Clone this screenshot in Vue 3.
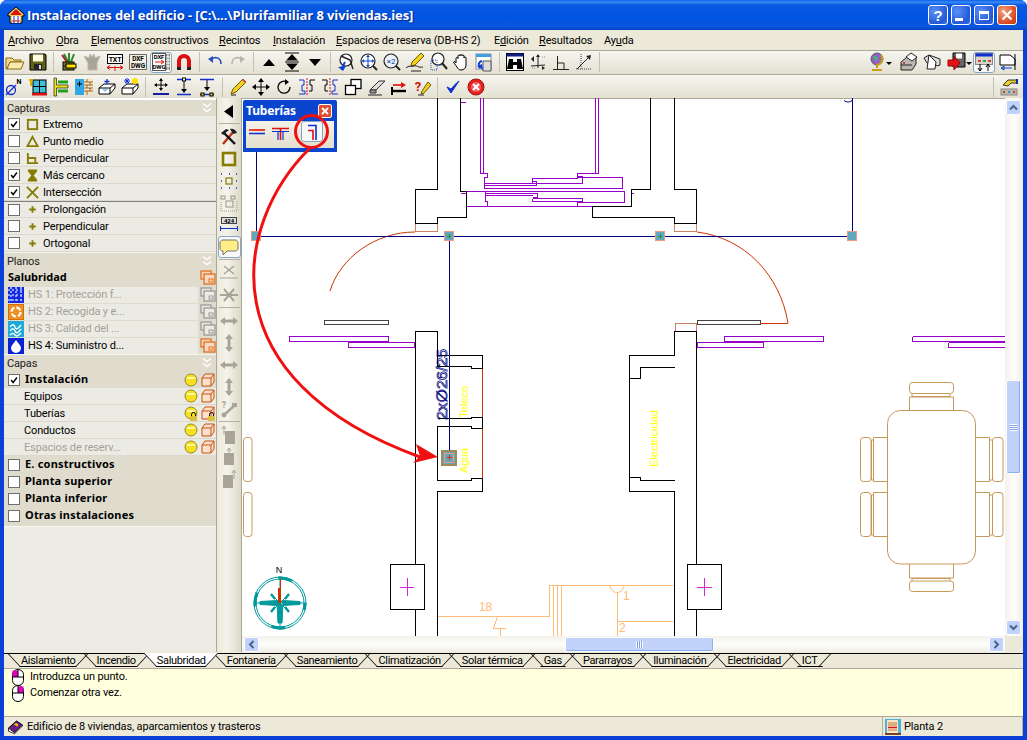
<script setup>
// small icon set, all drawn on a 20x20 box
const olive = '#857c00'
const icons = {
  folder: `<path d="M1 6h6l2 2h7v2H5L2 17H1z" fill="#f3d987" stroke="#8a6a10"/><path d="M5 10h14l-3 7H2z" fill="#fbeab0" stroke="#8a6a10"/>`,
  save: `<path d="M2 2h15l1 1v15H2z" fill="#5f5f18" stroke="#000"/><rect x="5" y="2.5" width="10" height="7" fill="#fffbe0"/><rect x="6" y="12" width="8" height="6" fill="#222"/><rect x="11" y="13" width="2" height="4" fill="#ddd"/>`,
  pens: `<path d="M5 2l4 8M15 2l-3 8M10 1v9" stroke="#2a8a2a" stroke-width="2"/><path d="M3 3l5 7" stroke="#b02020" stroke-width="2"/><rect x="4" y="10" width="11" height="8" fill="#7a7a20" stroke="#000"/><rect x="7" y="12" width="10" height="4" fill="#ffe400" stroke="#000"/><path d="M7 14h-3" stroke="#00a"/>`,
  shirt: `<path d="M2 4l5 2 1-4 2 3 2-3 1 4 5-2-3 7v7H6v-7z" fill="#a8a498" stroke="#bdb9ab"/>`,
  txt: `<rect x="2.5" y="2.5" width="15" height="9" fill="#fff" stroke="#000"/><text x="10" y="9.6" font-size="7" font-weight="700" text-anchor="middle">TXT</text><path d="M2 15.5h16M5 13.5l-3 2 3 2M15 13.5l3 2-3 2M10 14v5" stroke="#e01010" fill="none"/>`,
  dxf: `<path d="M1.5 2.5h17v15h-17z" fill="#f4f1e4" stroke="#666"/><text x="10" y="9" font-size="6.5" font-weight="700" text-anchor="middle">DXF</text><text x="10" y="16" font-size="6.5" font-weight="700" text-anchor="middle">DWG</text>`,
  dxfdwg: `<rect x="1.5" y="1.5" width="13" height="17" fill="#fff" stroke="#555"/><text x="8" y="7" font-size="6" font-weight="700" text-anchor="middle">DXF</text><text x="8" y="17" font-size="6" font-weight="700" text-anchor="middle">DWG</text><path d="M4 10h9M10 8l3 2-3 2" stroke="#e01010" fill="none"/><path d="M15 2h4v16h-4z" fill="#8a8068"/><path d="M15 5h4M15 8h4M15 11h4M15 14h4M17 2v16" stroke="#fff"/>`,
  magnet: `<path d="M5 16V9a5 5 0 0 1 10 0v7" fill="none" stroke="#d81010" stroke-width="4"/><path d="M3 15h4v3H3zM13 15h4v3h-4z" fill="#222"/>`,
  undo: `<path d="M6 7c5-3 10-1 10 5" fill="none" stroke="#2a50c0" stroke-width="1.6"/><path d="M3 7l5-3 0 7z" fill="#2a50c0"/>`,
  redo: `<path d="M14 7c-5-3-10-1-10 5" fill="none" stroke="#b8b5a8" stroke-width="1.6"/><path d="M17 7l-5-3 0 7z" fill="#b8b5a8"/>`,
  up: `<path d="M4 14h12l-6-7z" fill="#000"/>`,
  updown: `<path d="M4 8.500h12l-6-6.500zM4 11.500h12l-6 6.500z" fill="#000"/><path d="M3 10h14" stroke="#000"/><path d="M3 1h14M3 19h14" stroke="#000"/>`,
  down: `<path d="M4 7h12l-6 7z" fill="#000"/>`,
  zoomr: `<circle cx="10" cy="8" r="6" fill="#fff" stroke="#222" stroke-width="1.2"/><path d="M5 4l9 4 3 9" fill="none" stroke="#222" stroke-width="1.4"/><path d="M9 10c-2 3-3 5-3 8" fill="none" stroke="#1040d0" stroke-width="2"/><path d="M2 15l5 4 3-5z" fill="#1040d0"/>`,
  zoomall: `<circle cx="9" cy="9" r="7" fill="#fff" stroke="#222" stroke-width="1.2"/><path d="M9 3v12M3 9h12" stroke="#1040d0"/><path d="M9 3l-2 2h4zM9 15l-2-2h4zM3 9l2-2v4zM15 9l-2-2v4z" fill="#1040d0"/><path d="M14 14l4 4" stroke="#222" stroke-width="2"/>`,
  zoom2: `<circle cx="9" cy="9" r="7" fill="#eaf4fa" stroke="#222" stroke-width="1.2"/><text x="9" y="12" font-size="8" text-anchor="middle" fill="#1040a0">×2</text><path d="M14 14l4 4" stroke="#222" stroke-width="2"/>`,
  scribble: `<path d="M16 1l3 3-9 9-4 1 1-4z" fill="#f5d020" stroke="#6a5a00"/><path d="M1 16c3-3 5-1 8-2s4 2 9 1M6 19h10" fill="none" stroke="#222"/>`,
  zoomwin: `<circle cx="10" cy="7" r="6" fill="#fff" stroke="#222" stroke-width="1.2"/><path d="M3 8h6v10H3zM9 13h8" fill="none" stroke="#2050c0" stroke-dasharray="1 1"/><path d="M14 11l5 6" stroke="#222" stroke-width="2"/>`,
  hand: `<path d="M5 11V6.500a1 1 0 0 1 2 0V4a1 1 0 0 1 2 0v-.500a1 1 0 0 1 2 0V4a1 1 0 0 1 2 0v2a1 1 0 0 1 2 0v7c0 3-2 5-5 5-2 0-3-1-4-3l-3-4c-1-2 1-2 2 0z" fill="#fff" stroke="#000"/>`,
  winback: `<rect x="2" y="2" width="15" height="15" fill="#fff" stroke="#889"/><rect x="2" y="2" width="15" height="3" fill="#40a0e0"/><path d="M9 9h8v10H9z" fill="#ddd" stroke="#555"/><path d="M8 9c-4 1-4 5-2 7" fill="none" stroke="#1040d0" stroke-width="2"/><path d="M3 14l6 4-1-6z" fill="#1040d0"/>`,
  binoc: `<rect x="1.500" y="1.500" width="17" height="17" fill="#fff" stroke="#000"/><rect x="1.500" y="1.500" width="17" height="3" fill="#102080"/><path d="M4 7h4v3h4V7h4l2 10h-6v-4H8v4H2z" fill="#000"/>`,
  axes: `<path d="M10 3v13M3 14l14-1" stroke="#222" fill="none"/><path d="M3 7l3-3v6zM10 2l-2 3h4zM17 16l-3-2v4z" fill="#222"/><path d="M4 16h4M14 5h3" stroke="#888" stroke-dasharray="1 1"/>`,
  perp: `<path d="M2 17.500h16M6.500 17V4M6.500 11H13v6" fill="none" stroke="#222"/>`,
  diag: `<path d="M3 17L16 4" stroke="#222"/><path d="M17 3l-5 1 4 4z" fill="#222"/><path d="M7 2v16M2 17h16" stroke="#444" stroke-dasharray="1 1"/>`,
  globe: `<circle cx="10" cy="7" r="6" fill="#9c5cc8" stroke="#556"/><path d="M6 4l5 1-2 5zM12 9l3-2v3z" fill="#30c060"/><path d="M14 3c3 5 0 10-5 10" fill="none" stroke="#c8a010" stroke-width="2"/><path d="M10 13v3M5 18h10" stroke="#c8a010" stroke-width="2"/>`,
  printer: `<path d="M2 10l6-5h9v7l-4 6H2z" fill="#b8b8b0" stroke="#222"/><path d="M7 5l5-4 6 4-5 4z" fill="#fff" stroke="#222"/><path d="M2 13h11" stroke="#222"/><circle cx="5" cy="11" r="1" fill="#d02020"/>`,
  plotter: `<path d="M2 6l5-3 11 4v6l-3 1-2-2-8-1z" fill="#ddd" stroke="#222"/><path d="M7 3l-2 14h8l1-7z" fill="#fff" stroke="#222"/>`,
  export: `<path d="M6 1h12v14H6z" fill="#666" stroke="#000"/><rect x="9" y="1.500" width="6" height="5" fill="#fff"/><path d="M1 8h6V4l6 7-6 7v-4H1z" fill="#e81010" stroke="#901010"/>`,
  bars: `<rect x="1.500" y="1.500" width="17" height="11" fill="#d8d5c8" stroke="#888"/><rect x="1.500" y="1.500" width="17" height="3" fill="#1030d0"/><path d="M4 8h3v2H4z" fill="#d04040"/><path d="M9 8h3v2H9z" fill="#30a060"/><path d="M14 8h3v2h-3z" fill="#d04040"/><path d="M6 12v7M14 12v7M4 16l2 3 2-3M12 15l2-3 2 3" stroke="#000" fill="none"/>`,
  folderb: `<path d="M3 3h10l5 4v6H3z" fill="#fff" stroke="#000"/><path d="M4 16h11M4 16l3-2v4z" stroke="#1040d0" fill="none"/><path d="M18 2v16" stroke="#000"/>`,
  oslash: `<circle cx="6" cy="13" r="4.500" fill="none" stroke="#1030d0" stroke-width="1.300"/><path d="M1 18L11 8" stroke="#1030d0" stroke-width="1.300"/><text x="14" y="7" font-size="7" font-weight="700" text-anchor="middle">N</text>`,
  windowr: `<rect x="5" y="3" width="13" height="13" fill="#40c0d8" stroke="#000"/><path d="M11.500 3v13M5 9.500h13" stroke="#000"/><rect x="4" y="16" width="15" height="2.500" fill="#e01010"/><path d="M3 3v6M1 3h4" stroke="#e0b000" stroke-width="2"/>`,
  tpipe: `<path d="M3 1v18h2.500V11H17V8H5.500V1z" fill="#e8e020" stroke="#000" stroke-width=".6"/><path d="M7 5h10M7 14h10" stroke="#20a020" stroke-width="3"/>`,
  brick: `<rect x="1" y="2" width="9" height="16" fill="#30a8e8"/><path d="M3 7h5M5.500 4.500v5" stroke="#000"/><rect x="10" y="2" width="9" height="16" fill="#f2e4c4"/><path d="M10 5h9M10 8h9M10 11h9M10 14h9M13 2v3M16 5v3M13 8v3M16 11v3M13 14v4" stroke="#8a4a10" stroke-width=".8"/>`,
  boxplus: `<path d="M2 11l5-4h11v4l-5 6H2z" fill="#fff" stroke="#000"/><path d="M2 11h11v6M13 11l5-4" fill="none" stroke="#000"/><path d="M10 2v5M7.500 4.500h5" stroke="#1030d0" stroke-width="1.300"/><path d="M5 12l3 3 3-3" fill="#80c8f0"/>`,
  boxsun: `<path d="M2 11l5-4h11v4l-5 6H2z" fill="#fff" stroke="#000"/><path d="M2 11h11v6M13 11l5-4" fill="none" stroke="#000"/><circle cx="15" cy="4" r="3" fill="#ffe000"/><path d="M7 1v6M4 4h6M5 2l4 4M9 2L5 6" stroke="#1030d0"/>`,
  movedim: `<path d="M10 2v11M4 8h12" stroke="#000"/><path d="M10 1L8 4h4zM10 14l-2-3h4zM3 8l3-2v4zM17 8l-3-2v4z" fill="#000"/><rect x="2" y="16" width="16" height="2" fill="#1020a0"/>`,
  dimup: `<path d="M3 2.500h14" stroke="#1030d0" stroke-width="1.300"/><rect x="8.500" y="1" width="3" height="3" fill="#fff" stroke="#000"/><path d="M10 4v9" stroke="#000"/><path d="M10 16l-3-4h6z" fill="#000"/><path d="M3 17.500h14" stroke="#1030d0" stroke-width="1.300"/>`,
  dimdown: `<path d="M3 2.500h14" stroke="#1030d0" stroke-width="1.300"/><path d="M10 3v8" stroke="#000"/><path d="M10 14l-3-4h6z" fill="#000"/><path d="M3 17.500h14" stroke="#1030d0" stroke-width="1.300"/><rect x="4" y="16" width="3" height="3" fill="#e8d000" stroke="#000"/><rect x="13" y="16" width="3" height="3" fill="#e8d000" stroke="#000"/>`,
  pencil: `<path d="M15 2l3 3-10 10-5 2 2-5z" fill="#f5d020" stroke="#6a5a00"/><path d="M14 3l3 3 1-1-3-3z" fill="#e04040"/><path d="M3 18h5" stroke="#222"/>`,
  move: `<path d="M10 3v14M3 10h14" stroke="#000"/><path d="M10 1L7 5h6zM10 19l-3-4h6zM1 10l4-3v6zM19 10l-4-3v6z" fill="#000"/>`,
  rotate: `<path d="M16 10a6 6 0 1 1-3-5" fill="none" stroke="#000" stroke-width="1.300"/><path d="M11 2l4 3-4 3z" fill="#000"/>`,
  mirrorl: `<path d="M10 1v18" stroke="#e01010" stroke-dasharray="2 1"/><path d="M2 3h5v5H5v6h3v3H2" fill="none" stroke="#1030d0"/><path d="M18 3h-5v5h2v6h-3" fill="none" stroke="#000"/>`,
  mirrorr: `<path d="M10 1v18" stroke="#e01010" stroke-dasharray="2 1"/><path d="M18 3h-5v5h2v6h-3v3h6" fill="none" stroke="#1030d0"/><path d="M2 3h5v5H5v6h3" fill="none" stroke="#000"/>`,
  copy: `<rect x="8" y="2.500" width="10" height="9" fill="#fff" stroke="#000" stroke-width="1.300"/><rect x="2.500" y="8.500" width="10" height="9" fill="#fff" stroke="#000" stroke-width="1.300"/>`,
  eraser: `<path d="M4 13l9-9h6l-9 9z" fill="#ddd" stroke="#333"/><path d="M4 13h6v3H4z" fill="#999" stroke="#333"/><path d="M2 18h14" stroke="#222"/>`,
  swap: `<path d="M4 8h9" stroke="#e01010" stroke-width="1.600"/><path d="M12 5l5 3-5 3z" fill="#e01010"/><path d="M4 14h13" stroke="#000" stroke-width="2.400"/><path d="M3 10v8" stroke="#000" stroke-width="2"/>`,
  qpen: `<text x="6" y="13.500" font-size="13" font-weight="700" fill="#d01010" text-anchor="middle">?</text><path d="M16 5l3 3-7 8-3 1 1-3z" fill="#f5d020" stroke="#6a5a00"/><path d="M6 18h6" stroke="#222"/>`,
  check: `<path d="M4 10l4 6 8-12c-3 2-6 6-8 8z" fill="#1030d0" stroke="#1030d0" stroke-linejoin="round"/>`,
  cancel: `<circle cx="10" cy="10" r="8" fill="#e82020" stroke="#a01010"/><circle cx="10" cy="10" r="5" fill="#f06060"/><path d="M7 7l6 6M13 7l-6 6" stroke="#fff" stroke-width="2"/>`,
  handbars: `<path d="M4 8l5-5h9v3H12l-3 3z" fill="#f0d020" stroke="#333"/><path d="M17 2h2v5h-2z" fill="#1030a0"/><rect x="2" y="12" width="16" height="6" fill="#bbb8aa" stroke="#888"/><rect x="4" y="14" width="2" height="2" fill="#d04040"/><rect x="9" y="14" width="2" height="2" fill="#3090d0"/><rect x="14" y="14" width="2" height="2" fill="#d04040"/>`,
  arrowl: `<path d="M14 4v13L5 10.500z" fill="#000"/>`,
  tools: `<path d="M4 17L15 4" stroke="#c03010" stroke-width="2.400"/><path d="M16 17L5 6" stroke="#111" stroke-width="2.400"/><path d="M2 6l5-4 3 1-6 5zM11 2c3-1 6 1 7 4l-4 1z" fill="#222"/>`,
  square: `<rect x="4" y="4" width="12" height="12" fill="none" stroke="${olive}" stroke-width="2.600"/>`,
  snapdots: `<rect x="7" y="7" width="6" height="6" fill="none" stroke="${olive}" stroke-width="1.200"/><path d="M2 3h1M10 3h1M17 3h1M2 10h1M17 10h1M2 17h1M10 17h1M17 17h1" stroke="#1030d0" stroke-width="1.400"/>`,
  snapgrey: `<rect x="2" y="3" width="4" height="3" fill="none" stroke="#99968a"/><rect x="12" y="3" width="4" height="3" fill="none" stroke="#99968a"/><rect x="7" y="8" width="7" height="6" fill="none" stroke="#99968a"/><path d="M2 9v9h16V8" fill="none" stroke="#99968a" stroke-dasharray="1 1"/>`,
  dimbox: `<rect x="2.500" y="2.500" width="15" height="6" fill="#ddd" stroke="#444"/><text x="10" y="8" font-size="6" font-weight="700" text-anchor="middle">424</text><path d="M1 13.500h18M1.500 11v5M18.500 11v5" stroke="#1030d0"/>`,
  comment: `<path d="M4 3h12c2 0 3 1 3 3v5c0 2-1 3-3 3H8l-4 4v-4c-2 0-3-1-3-3V6c0-2 1-3 3-3z" fill="#ffee88" stroke="#776"/>`,
  crossa: `<path d="M5 3l10 8M15 3L5 11" stroke="#a8a498" stroke-width="1.600"/><path d="M1 15h18" stroke="#a8a498"/>`,
  crossb: `<path d="M1 10h18" stroke="#a8a498" stroke-width="2"/><path d="M5 4l10 12M15 4L5 16" stroke="#a8a498" stroke-width="2"/>`,
  harr: `<path d="M5 10h10" stroke="#a8a498" stroke-width="3"/><path d="M1 10l5-4v8zM19 10l-5-4v8z" fill="#a8a498"/>`,
  varr: `<path d="M10 5v10" stroke="#a8a498" stroke-width="3"/><path d="M10 1l-4 5h8zM10 19l-4-5h8z" fill="#a8a498"/>`,
  qknot: `<text x="5" y="9" font-size="9" fill="#a8a498" font-weight="700" text-anchor="middle">?</text><path d="M5 16l11-10" stroke="#a8a498" stroke-width="2.400"/><circle cx="5" cy="16" r="2.400" fill="#a8a498"/><rect x="13" y="4" width="5" height="4" fill="#a8a498"/>`,
  walla: `<path d="M6 6h10v13H6z" fill="#a8a498"/><path d="M5 1v9M3 4l2-3 2 3" stroke="#a8a498" fill="none"/>`,
  wallb: `<path d="M5 6h10v12H5z" fill="#a8a498"/><path d="M10 1v5M8 4l2-3 2 3" stroke="#a8a498" fill="none"/>`,
  wallc: `<path d="M4 6h10v13H4z" fill="#a8a498"/><path d="M15 1v9M13 4l2-3 2 3" stroke="#a8a498" fill="none"/>`,
}

const row1 = ['folder', 'save', '|', 'pens', 'shirt', 'txt', 'dxf', '*dxfdwg', 'magnet', '|', 'undo', 'redo', '|', 'up', 'updown', 'down', '|',
  'zoomr', 'zoomall', 'zoom2', 'scribble', 'zoomwin', 'hand', 'winback', '|', 'binoc', 'axes', 'perp', 'diag', '|']
const row2 = ['oslash', 'windowr', 'tpipe', 'brick', 'boxplus', 'boxsun', '|', 'movedim', 'dimup', 'dimdown', '|',
  'pencil', 'move', 'rotate', 'mirrorl', 'mirrorr', 'copy', 'eraser', 'swap', 'qpen', '|', 'check', 'cancel']
const side = ['arrowl', '|', 'tools', 'square', 'snapdots', 'snapgrey', 'dimbox', '*comment', '|', 'crossa', 'crossb', '|',
  'harr', 'varr', 'harr', 'varr', 'qknot', '|', 'walla', 'wallb', 'wallc']

const capturas = [
  { label: 'Extremo', on: true, shape: 'square' },
  { label: 'Punto medio', shape: 'tri' },
  { label: 'Perpendicular', shape: 'perp' },
  { label: 'Más cercano', on: true, shape: 'hour' },
  { label: 'Intersección', on: true, shape: 'x' },
  { label: 'Prolongación', shape: 'plus', line: true },
  { label: 'Perpendicular', shape: 'plus' },
  { label: 'Ortogonal', shape: 'plus' },
]
const snapShapes = {
  square: `<rect x="2" y="2" width="10" height="10" fill="none" stroke="${olive}" stroke-width="2"/>`,
  tri: `<path d="M7 2l5.500 10h-11z" fill="none" stroke="${olive}" stroke-width="2"/>`,
  perp: `<path d="M2 1v11h11M2 6.500h8V12" fill="none" stroke="${olive}" stroke-width="2"/>`,
  hour: `<path d="M2 1.500h10M2 12.500h10M3 2l8 10M11 2L3 12" fill="none" stroke="${olive}" stroke-width="2"/><path d="M4 2h6l-3 5zM4 12h6l-3-5z" fill="${olive}"/>`,
  x: `<path d="M1 1l12 12M13 1L1 13" stroke="${olive}" stroke-width="2"/>`,
  plus: `<path d="M7 3.500v7M3.500 7h7" stroke="${olive}" stroke-width="2"/>`,
}

const planos = [
  { label: 'HS 1: Protección f...', kind: 'hs1' },
  { label: 'HS 2: Recogida y e...', kind: 'hs2' },
  { label: 'HS 3: Calidad del ...', kind: 'hs3' },
  { label: 'HS 4: Suministro d...', kind: 'hs4', on: true },
]
const hsIcons = {
  hs1: `<rect width="16" height="16" fill="#1828e0"/><path d="M0 3h16M0 8h16M0 13h16M3 0v16M8 0v16M13 0v16" stroke="#a8c8ff" stroke-width="1.600" stroke-dasharray="2 2"/>`,
  hs2: `<rect x=".5" y=".5" width="15" height="15" fill="#f09020" stroke="#d07000"/><circle cx="8" cy="8" r="4.500" fill="none" stroke="#fff" stroke-width="2" stroke-dasharray="5 2"/>`,
  hs3: `<rect width="16" height="16" fill="#20a8d8"/><path d="M2 6c2-3 4-3 5 0s3 2 6-2M2 10c2-3 4-3 5 0s3 2 6-2M2 14c2-2 4-2 5 0s3 1 6-2" fill="none" stroke="#fff" stroke-width="1.300"/>`,
  hs4: `<rect width="16" height="16" fill="#0820d8"/><path d="M8 2c3 4 5 6 5 8a5 5 0 0 1-10 0c0-2 2-4 5-8z" fill="#fff"/>`,
}
const capas = [
  { label: 'Equipos' },
  { label: 'Tuberías', locked: true },
  { label: 'Conductos' },
  { label: 'Espacios de reserv...', off: true },
]
const grupos = ['E. constructivos', 'Planta superior', 'Planta inferior', 'Otras instalaciones']
const tabs = ['Aislamiento', 'Incendio', 'Salubridad', 'Fontanería', 'Saneamiento', 'Climatización', 'Solar térmica', 'Gas', 'Pararrayos', 'Iluminación', 'Electricidad', 'ICT']

// drawing data, in page coordinates (the canvas viewBox starts at 242,98)
const walls = [
  '437.5,98 437.5,189.5 415.5,189.5 415.5,223.5 437.5,223.5 437.5,217.5 466.5,217.5 466.5,191.5 460.5,191.5 460.5,98',
  '650.5,98 650.5,189.5 631.5,189.5 631.5,206.5 592.5,206.5 592.5,217.5 674.5,217.5 674.5,223.5 696.5,223.5 696.5,189.5 674.5,189.5 674.5,98',
  '415.5,564 415.5,331.5 437.5,331.5 437.5,366.5 471.5,366.5 471.5,368.5 482.5,368.5 482.5,355.5 437.5,355.5',
  '437.5,418.5 471.5,418.5 471.5,417.5 482.5,417.5 482.5,428.5 471.5,428.5 471.5,426.5 437.5,426.5 437.5,480.5 471.5,480.5 471.5,478.5 482.5,478.5 482.5,491.5 437.5,491.5 437.5,636',
  '415.5,609 415.5,636',
  '696.5,564 696.5,331.5 674.5,331.5 674.5,355.5 629.5,355.5 629.5,378.5 640.5,378.5 640.5,367.5 674.5,367.5',
  '674.5,480.5 640.5,480.5 640.5,477.5 629.5,477.5 629.5,491.5 674.5,491.5 674.5,636',
  '629.5,378.5 629.5,477.5',
  '696.5,609 696.5,636',
]
const purple = [
  'M480.5 98V173.5H487.5V177.500H484.5V188.5H622.500V177.500H577.5V173.5H598.5V98M483.5 98V173.5M595.5 98V173.5',
  'M532 178.500V183.500H582V176.500H578M532 178.500H578',
  'M484.500 183.500H533M484.500 185.500H536V181.500H532',
  'M466.5 191.500H624.500V202.500H577.500V206.500M466.5 206.500H631.500',
  'M485.500 191.500V201.500H487.500V206.500M486 193.500H537V197.500H533M486 195.500H533',
  'M532.500 198.500V201.500H582.500V198.500H532.500M532.500 198.500H579',
  'M460.500 102.500H466M460.500 193.500H466.500M460.500 217.500H466M631.500 193.500H634',
  'M289.500 336.500H388.500V341.500H289.500ZM348.500 342.500H414.500V347.500H348.500Z',
  'M724.500 336.500H823.500V341.500H724.500ZM697.500 342.500H763.500V347.500H697.500Z',
  'M912.500 336.500H1005M912.500 341.500H1005M912.500 336.500V341.500M948.500 342.500H1005M948.500 347.500H1005M948.500 342.500V347.500',
]
const nodes = [[256, 236], [449, 236], [660, 236], [852, 236]]
const chairs = [[437], [492]]
</script>

<template>
  <div class="win">
    <div class="titlebar">
      <svg class="appicon" width="18" height="18" viewBox="0 0 18 18">
        <path d="M9 1L1 8v2h2v7h12v-7h2V8z" fill="#f4d060" stroke="#000"/>
        <path d="M9 3L3 9h12z" fill="#d81010"/>
        <rect x="5" y="10" width="8" height="7" fill="#fff"/>
        <path d="M7 10v7M11 10v7" stroke="#1030d0"/>
        <path d="M5 15h8" stroke="#d81010"/>
      </svg>
      <span class="title">Instalaciones del edificio - [C:\...\Plurifamiliar 8 viviendas.ies]</span>
      <div class="capbtns">
        <span class="capbtn help">?</span>
        <span class="capbtn"><i class="minbar"></i></span>
        <span class="capbtn"><i class="maxbox"></i></span>
        <span class="capbtn close">
          <svg width="12" height="12" viewBox="0 0 12 12"><path d="M1.500 1.500l9 9M10.500 1.500l-9 9" stroke="#fff" stroke-width="2.200"/></svg>
        </span>
      </div>
    </div>

    <div class="body">
      <div class="menu">
        <span><u>A</u>rchivo</span>
        <span><u>O</u>bra</span>
        <span><u>E</u>lementos constructivos</span>
        <span><u>R</u>ecintos</span>
        <span><u>I</u>nstalación</span>
        <span><u>E</u>spacios de reserva (DB-HS 2)</span>
        <span>E<u>d</u>ición</span>
        <span><u>R</u>esultados</span>
        <span>Ay<u>u</u>da</span>
      </div>

      <div class="toolbar row1">
        <template v-for="(name, i) in row1" :key="i">
          <i v-if="name === '|'" class="sep"></i>
          <span v-else class="btn" :class="{ active: name[0] === '*' }">
            <svg class="ic" viewBox="0 0 20 20" v-html="icons[name.replace('*', '')]"></svg>
          </span>
        </template>
        <div class="spacer"></div>
        <span class="btn"><svg class="ic" viewBox="0 0 20 20" v-html="icons.globe"></svg></span>
        <i class="caret c1"></i>
        <span class="btn"><svg class="ic" viewBox="0 0 20 20" v-html="icons.printer"></svg></span>
        <span class="btn"><svg class="ic" viewBox="0 0 20 20" v-html="icons.plotter"></svg></span>
        <span class="btn gapl"><svg class="ic" viewBox="0 0 20 20" v-html="icons.export"></svg></span>
        <i class="caret"></i>
        <span class="btn active"><svg class="ic" viewBox="0 0 20 20" v-html="icons.bars"></svg></span>
        <span class="btn"><svg class="ic" viewBox="0 0 20 20" v-html="icons.folderb"></svg></span>
      </div>

      <div class="toolbar row2">
        <template v-for="(name, i) in row2" :key="i">
          <i v-if="name === '|'" class="sep"></i>
          <span v-else class="btn"><svg class="ic" viewBox="0 0 20 20" v-html="icons[name]"></svg></span>
        </template>
        <div class="spacer"></div>
        <i class="sep"></i>
        <span class="btn"><svg class="ic" viewBox="0 0 20 20" v-html="icons.handbars"></svg></span>
      </div>

      <div class="main">
        <aside class="panel">
          <div class="phead first">Capturas<svg class="fold" viewBox="0 0 10 10"><path d="M1 1l4 3 4-3M1 6l4 3 4-3" fill="none" stroke="#fff" stroke-width="1.500"/></svg></div>
          <div v-for="c in capturas" :key="c.label + c.shape" class="row snap" :class="{ dark: c.line }">
            <span class="chk"><svg v-if="c.on" viewBox="0 0 12 12"><path d="M2.500 6l2.500 3 4.500-6" fill="none" stroke="#000" stroke-width="1.700"/></svg></span>
            <svg class="snapic" viewBox="0 0 14 14" v-html="snapShapes[c.shape]"></svg>
            <span>{{ c.label }}</span>
          </div>

          <div class="phead">Planos<svg class="fold" viewBox="0 0 10 10"><path d="M1 1l4 3 4-3M1 6l4 3 4-3" fill="none" stroke="#fff" stroke-width="1.500"/></svg></div>
          <div class="row grp">
            <b class="grow">Salubridad</b>
            <svg class="cp" viewBox="0 0 16 16"><rect x="1" y="1" width="10" height="8" fill="#f8d8c0" stroke="#e07020" stroke-width="1.300"/><rect x="4" y="4" width="11" height="10" fill="#f8d8c0" stroke="#e07020" stroke-width="1.300"/><rect x="9" y="9" width="4" height="3" fill="none" stroke="#e07020"/></svg>
          </div>
          <div v-for="p in planos" :key="p.kind" class="row plano" :class="{ off: !p.on }">
            <svg class="hs" viewBox="0 0 16 16" v-html="hsIcons[p.kind]"></svg>
            <span class="grow">{{ p.label }}</span>
            <svg class="cp" viewBox="0 0 16 16">
              <rect x="1" y="1" width="10" height="8" :fill="p.on ? '#f8d8c0' : '#eceae2'" :stroke="p.on ? '#e07020' : '#999'" stroke-width="1.300"/>
              <rect x="4" y="4" width="11" height="10" :fill="p.on ? '#f8d8c0' : '#eceae2'" :stroke="p.on ? '#e07020' : '#999'" stroke-width="1.300"/>
              <rect x="9" y="9" width="4" height="3" fill="none" :stroke="p.on ? '#e07020' : '#999'"/>
            </svg>
          </div>

          <div class="phead">Capas<svg class="fold" viewBox="0 0 10 10"><path d="M1 1l4 3 4-3M1 6l4 3 4-3" fill="none" stroke="#fff" stroke-width="1.500"/></svg></div>
          <div class="row grp">
            <span class="chk"><svg viewBox="0 0 12 12"><path d="M2.500 6l2.500 3 4.500-6" fill="none" stroke="#000" stroke-width="1.700"/></svg></span>
            <b class="grow">Instalación</b>
            <svg class="bulb" viewBox="0 0 14 14"><circle cx="7" cy="7" r="6" fill="#f6e020" stroke="#9a8a20"/><path d="M3 5h8" stroke="#fff8a0" stroke-width="2"/></svg>
            <svg class="cube" viewBox="0 0 14 14"><path d="M1 5l3-4h9v8l-3 4H1z" fill="#fbe0cc" stroke="#c85010"/><path d="M1 5h9v8M10 5l3-4" fill="none" stroke="#c85010"/></svg>
          </div>
          <div v-for="l in capas" :key="l.label" class="row capa" :class="{ off: l.off }">
            <span class="grow">{{ l.label }}</span>
            <svg class="bulb" viewBox="0 0 14 14"><circle cx="7" cy="7" r="6" fill="#f6e020" stroke="#9a8a20"/><path d="M3 5h8" stroke="#fff8a0" stroke-width="2"/></svg>
            <svg class="cube" viewBox="0 0 14 14"><path d="M1 5l3-4h9v8l-3 4H1z" fill="#fbe0cc" stroke="#c85010"/><path d="M1 5h9v8M10 5l3-4" fill="none" stroke="#c85010"/></svg>
            <template v-if="l.locked">
              <svg class="lock l1" viewBox="0 0 9 9"><path d="M2.500 4V2.500a2 2 0 0 1 4 0V4" fill="none" stroke="#000"/><rect x="1" y="4" width="7" height="5" fill="#d8c040"/></svg>
              <svg class="lock l2" viewBox="0 0 9 9"><path d="M2.500 4V2.500a2 2 0 0 1 4 0V4" fill="none" stroke="#000"/><rect x="1" y="4" width="7" height="5" fill="#d8c040"/></svg>
            </template>
          </div>
          <div v-for="g in grupos" :key="g" class="row grp">
            <span class="chk"></span><b class="grow">{{ g }}</b>
          </div>
          <div class="prest"></div>
        </aside>

        <div class="vtool">
          <template v-for="(name, i) in side" :key="i">
            <i v-if="name === '|'" class="hsep"></i>
            <span v-else class="vbtn" :class="{ active: name[0] === '*' }">
              <svg class="ic" viewBox="0 0 20 20" v-html="icons[name.replace('*', '')]"></svg>
            </span>
          </template>
        </div>

        <div class="work">
          <div class="canvas">
            <svg class="plan" width="763" height="538" viewBox="242 98 763 538" fill="none" shape-rendering="crispEdges">
              <!-- muebles y cotas de fondo -->
              <g stroke="#ffbb77">
                <path d="M437 616.500H549.500V585.500H673M553.500 585.500V636M557.500 585.500V636M561.500 585.500V636M617.500 592V636M617.500 621.500H673"/>
                <path d="M497.500 616.500L493.500 628.500H505.500M500.500 628.500V636"/>
                <path d="M610 585.500a7 7 0 0 0 14 0" shape-rendering="auto"/>
              </g>
              <g fill="#ffbb77" font-size="12">
                <text x="479" y="611">18</text>
                <text x="623" y="600">1</text>
                <text x="619" y="632">2</text>
              </g>

              <g stroke="#c89858" shape-rendering="auto">
                <rect x="887.500" y="410.500" width="88" height="153.500" rx="13"/>
                <path d="M909.500 410V397H953.500V410M912 396.500V393.500M950 396.500V393.500M912 396.500H950"/>
                <rect x="909.500" y="382.500" width="44" height="11" rx="3"/>
                <path d="M909.500 564V578H953.500V564M912 578.500V581M950 578.500V581M912 578.500H950"/>
                <rect x="909.500" y="581" width="44" height="10.500" rx="3"/>
                <g v-for="c in chairs" :key="c[0]">
                  <path :d="`M887 ${c[0] + 0.5}H873.500V${c[0] + 44.5}H887M871.500 ${c[0] + 3}V${c[0] + 43}H873M871.500 ${c[0] + 3}H873`"/>
                  <rect x="860.500" :y="c[0] + 0.5" width="10.500" height="44" rx="3"/>
                  <path :d="`M976 ${c[0] + 0.5}H989.500V${c[0] + 44.5}H976M989.500 ${c[0] + 3}H992.500V${c[0] + 43}H989.500`"/>
                  <rect x="992.500" :y="c[0] + 0.5" width="10.500" height="44" rx="3"/>
                  <rect x="243.500" :y="c[0] + 0.5" width="8.500" height="44" rx="3"/>
                </g>
              </g>

              <path v-for="(d, i) in purple" :key="'p' + i" :d="d" stroke="#9900cc"/>
              <polyline v-for="(w, i) in walls" :key="'w' + i" :points="w" stroke="#000"/>

              <!-- rectangulos grises y salmon de los muros -->
              <rect x="324.500" y="320.500" width="64" height="4" stroke="#444"/>
              <rect x="697.500" y="320.500" width="63" height="4" stroke="#444"/>
              <path d="M415.500 223.500V231.500H437.500V223.500M674.500 223.500V231.500H696.500V223.500M675.500 331V323.500H696.500V331" stroke="#d08060"/>
              <path d="M482.500 369V417M482.500 429V478" stroke="#cc3300"/>
              <path d="M760 323.500H788" stroke="#cc3300"/>

              <!-- puertas -->
              <path d="M415 232C375 232 340 258 330 291" stroke="#cc3300" shape-rendering="auto"/>
              <path d="M697 232C745 238 780 275 788 323" stroke="#cc3300" shape-rendering="auto"/>

              <!-- lineas de tuberia -->
              <path d="M256.500 150V236.500H852.500V98M449.500 236.500V457" stroke="#000080"/>
              <path d="M844 100.500c3 2 5 2 8 0" stroke="#000080" shape-rendering="auto"/>
              <g v-for="n in nodes" :key="n[0]">
                <rect :x="n[0] - 4.5" :y="n[1] - 4.5" width="9" height="9" fill="#5fa8c0" stroke="#ef9a80"/>
              </g>
              <path d="M660 234v4M658 236h4M449 234v4M447 236h4" stroke="#209040"/>

              <g>
                <text transform="translate(447 420) rotate(-90)" font-size="15" fill="none" stroke="#000080" stroke-width=".7" textLength="71" lengthAdjust="spacingAndGlyphs" shape-rendering="auto">2x∅26/25</text>
                <text transform="translate(468 418) rotate(-90)" font-size="11" fill="#ffff00" textLength="32" lengthAdjust="spacingAndGlyphs">Teleco</text>
                <text transform="translate(468 473) rotate(-90)" font-size="11" fill="#ffff00" textLength="25" lengthAdjust="spacingAndGlyphs">Agua</text>
                <text transform="translate(658 467) rotate(-90)" font-size="11" fill="#ffff00" textLength="57" lengthAdjust="spacingAndGlyphs">Electricidad</text>
              </g>

              <rect x="390.500" y="564.500" width="34" height="45" fill="#fff" stroke="#000"/>
              <path d="M407.500 578V596M400 587.500H414" stroke="#dd22dd"/>
              <rect x="687.500" y="564.500" width="34" height="45" fill="#fff" stroke="#000"/>
              <path d="M704.500 578V596M697 587.500H712" stroke="#dd22dd"/>

              <rect x="442" y="451" width="14" height="14" fill="#5fa8c0" stroke="#a08a58" stroke-width="2"/>
              <rect x="444.500" y="453.500" width="9" height="9" stroke="#ef9a80"/>
              <path d="M449.500 455V460M447 457.500H452" stroke="#d03020"/>

              <!-- rosa de los vientos -->
              <g stroke="#009999" shape-rendering="auto">
                <circle cx="280" cy="603" r="26"/>
                <circle cx="280" cy="603" r="24"/>
                <circle cx="280" cy="603" r="25" stroke-width="3" stroke-dasharray="14 26.800" stroke-dashoffset="7"/>
                <path d="M254 603H306M280 577V629"/>
                <path d="M260 601.500l18-1 2 2.500-2 2.500-18-1zM300 601.500l-18-1-2 2.500 2 2.500 18-1zM278 623l-1-20 3-2 3 2-1 20z" fill="#009999"/>
                <path d="M272 595l16 16M288 595l-16 16"/>
                <path d="M271 594l4 5M289 594l-4 5M271 612l4-5M289 612l-4-5" stroke-width="2.400"/>
              </g>
              <path d="M278 603V588H280V579H281V603Z" fill="#cc3300" shape-rendering="auto"/>
              <text x="279" y="573" font-size="9" fill="#000" text-anchor="middle">N</text>
            </svg>

            <div class="float">
              <div class="ftitle">
                <span>Tuberías</span>
                <span class="fclose"><svg width="8" height="8" viewBox="0 0 8 8"><path d="M1 1l6 6M7 1L1 7" stroke="#fff" stroke-width="1.800"/></svg></span>
              </div>
              <div class="fbody">
                <span class="fbtn"><svg class="ic" viewBox="0 0 20 20"><path d="M2 8h16" stroke="#e01010" stroke-width="1.600"/><path d="M2 11.500h16" stroke="#1030d0" stroke-width="1.600"/></svg></span>
                <span class="fbtn"><svg class="ic" viewBox="0 0 20 20"><path d="M1 6.500h17M9.500 6.500V18" stroke="#e01010" stroke-width="1.600"/><path d="M1 9.500h17M7 9.500V18M12 9.500V18" stroke="#1030d0" stroke-width="1.200"/></svg></span>
                <span class="fbtn active"><svg class="ic" viewBox="0 0 20 20"><path d="M6 8.500h5V18" fill="none" stroke="#e01010" stroke-width="1.600"/><path d="M6 3.500h8V18" fill="none" stroke="#1030d0" stroke-width="1.600"/></svg></span>
              </div>
            </div>

            <!-- anotacion roja sobre el plano -->
            <svg class="note" width="763" height="538" viewBox="242 98 763 538" fill="none">
              <circle cx="311.500" cy="131.500" r="16" stroke="#f01010" stroke-width="3"/>
              <path d="M310 148C232 225 208 380 420 457" stroke="#f01010" stroke-width="3"/>
              <path d="M438 457L416 444L420 456L413 463Z" fill="#f01010"/>
            </svg>
          </div>

          <div class="vscroll">
            <span class="sbtn"><svg width="9" height="7" viewBox="0 0 9 7"><path d="M1 5.500l3.500-3.500 3.500 3.500" fill="none" stroke="#4d6185" stroke-width="2"/></svg></span>
            <span class="vthumb"><i></i></span>
            <div class="spacer"></div>
            <span class="sbtn"><svg width="9" height="7" viewBox="0 0 9 7"><path d="M1 1.500l3.500 3.500 3.500-3.500" fill="none" stroke="#4d6185" stroke-width="2"/></svg></span>
          </div>
          <div class="hscroll">
            <span class="sbtn"><svg width="7" height="9" viewBox="0 0 7 9"><path d="M5.500 1l-3.500 3.500 3.500 3.500" fill="none" stroke="#4d6185" stroke-width="2"/></svg></span>
            <span class="hthumb"><i></i></span>
            <div class="spacer"></div>
            <span class="sbtn"><svg width="7" height="9" viewBox="0 0 7 9"><path d="M1.500 1l3.500 3.500-3.500 3.500" fill="none" stroke="#4d6185" stroke-width="2"/></svg></span>
          </div>
          <div class="corner"></div>
        </div>
      </div>

      <div class="tabs">
        <span v-for="t in tabs" :key="t" class="tab" :class="{ active: t === 'Salubridad' }"><em>{{ t }}</em></span>
      </div>

      <div class="msg">
        <div class="msgline">
          <svg width="12" height="17" viewBox="0 0 12 17"><path d="M.5 5.500a5.500 5 0 0 1 11 0v6a5.500 5 0 0 1-11 0z" fill="#fff" stroke="#000"/><path d="M.5 1.500H6V8H.5z" fill="#e000c0"/><path d="M.5 8h11M6 1v7" stroke="#000"/></svg>
          <span>Introduzca un punto.</span>
        </div>
        <div class="msgline">
          <svg width="12" height="17" viewBox="0 0 12 17"><path d="M.5 5.500a5.500 5 0 0 1 11 0v6a5.500 5 0 0 1-11 0z" fill="#fff" stroke="#000"/><path d="M6 1.500h5.500V8H6z" fill="#e000c0"/><path d="M.5 8h11M6 1v7" stroke="#000"/></svg>
          <span>Comenzar otra vez.</span>
        </div>
      </div>

      <div class="status">
        <div class="stleft">
          <svg width="17" height="16" viewBox="0 0 16 16"><path d="M1 9l8-7 6 4-8 8-6-2z" fill="#6a1a80" stroke="#000"/><path d="M1 9v3l6 3 8-8V6l-8 8z" fill="#fff" stroke="#000" stroke-width=".6"/><path d="M7 6c2-2 4 0 2 1" stroke="#ffe000" fill="none" stroke-width="1.500"/></svg>
          <span>Edificio de 8 viviendas, aparcamientos y trasteros</span>
        </div>
        <div class="stright">
          <svg width="16" height="16" viewBox="0 0 16 16"><rect width="16" height="16" fill="#50b0d0"/><rect x="2" y="1" width="11" height="13" fill="#f8e4c8"/><path d="M3 4h9M3 6h9M3 11h9" stroke="#c07830"/><path d="M3 8.500h9" stroke="#e01010" stroke-width="1.500"/><rect y="14" width="16" height="2" fill="#804020"/></svg>
          <span>Planta 2</span>
        </div>
      </div>
    </div>
  </div>
</template>

<style scoped>
.win {
  width: 1027px;
  height: 740px;
  display: flex;
  flex-direction: column;
  overflow: hidden;
  border-radius: 7px 7px 0 0;
  background: #0a3fd8;
  font-family: Roboto, "Liberation Sans", sans-serif;
  font-size: 11px;
  letter-spacing: -0.15px;
  color: #000;
}
.titlebar {
  height: 30px;
  flex: none;
  display: flex;
  align-items: center;
  padding: 0 10px 0 7px;
  background: linear-gradient(#0a5ce8 0, #3a8cf5 2px, #0a58e2 5px, #0054e3 18px, #0a55dc 27px, #0340c0 30px);
}
.appicon { flex: none; }
.title {
  margin-left: 2px;
  flex: 1;
  color: #fff;
  font-family: "Open Sans", "Liberation Sans", sans-serif;
  font-size: 13px;
  font-weight: 700;
  letter-spacing: -0.1px;
  text-shadow: 1px 1px 1px #0a2a90;
  white-space: nowrap;
}
.capbtns { display: flex; gap: 3px; }
.capbtn {
  width: 20px;
  height: 20px;
  box-sizing: border-box;
  display: flex;
  align-items: center;
  justify-content: center;
  border: 1px solid #fff;
  border-radius: 3px;
  background: radial-gradient(circle at 30% 30%, #5a90f5, #2558d8 70%, #3a70e8);
  position: relative;
}
.help {
  color: #fff;
  font: 700 15px "Liberation Sans", sans-serif;
}
.close { background: radial-gradient(circle at 30% 30%, #f0a080, #d84820 70%, #c83810); }
.minbar { width: 8px; height: 3px; background: #fff; margin-top: 8px; margin-right: 4px; }
.maxbox { width: 10px; height: 9px; box-sizing: border-box; border: 1px solid #fff; border-top-width: 3px; }

.body {
  flex: 1;
  margin: 0 4px 4px;
  display: flex;
  flex-direction: column;
  background: #ece9d8;
  min-height: 0;
}

.menu {
  height: 20px;
  flex: none;
  display: flex;
  align-items: center;
  padding-left: 4px;
  white-space: nowrap;
}
.menu span { display: block; }
.menu span:nth-child(1) { width: 48px; }
.menu span:nth-child(2) { width: 35px; }
.menu span:nth-child(3) { width: 128px; }
.menu span:nth-child(4) { width: 54px; }
.menu span:nth-child(5) { width: 63px; }
.menu span:nth-child(6) { width: 158px; }
.menu span:nth-child(7) { width: 45px; }
.menu span:nth-child(8) { width: 65px; }

.toolbar {
  height: 24px;
  flex: none;
  box-sizing: border-box;
  display: flex;
  align-items: center;
  border-top: 1px solid #aca899;
  background: linear-gradient(#f6f5ef, #e4e1d2);
}
.row1 { padding: 0 4px 1px 0; }
.row2 { padding-right: 2px; }
.btn {
  width: 22px;
  height: 21px;
  margin-right: 1px;
  flex: none;
  box-sizing: border-box;
  display: flex;
  align-items: center;
  justify-content: center;
}
.btn.gapl { margin-left: 2px; }
.btn.active, .vbtn.active, .fbtn.active {
  background: #f6f8fa;
  border: 1px solid #8aa6c6;
  border-radius: 3px;
}
.ic { width: 20px; height: 20px; flex: none; }
.sep {
  width: 1px;
  height: 20px;
  margin: 0 4px 0 3px;
  flex: none;
  background: #c5c2b2;
}
.caret {
  width: 0;
  height: 0;
  margin: 3px 1px 0 -3px;
  border: 3px solid transparent;
  border-top: 3px solid #000;
  border-bottom: 0;
  flex: none;
}
.caret.c1 { margin-right: 6px; }
.spacer { flex: 1; }

.main { flex: 1; display: flex; min-height: 0; }

.panel {
  width: 212px;
  flex: none;
  display: flex;
  flex-direction: column;
  background: #dfdbcd;
  border-top: 2px solid #fff;
  box-sizing: border-box;
  white-space: nowrap;
}
.phead {
  height: 17px;
  flex: none;
  box-sizing: border-box;
  display: flex;
  align-items: center;
  padding-left: 3px;
  border-top: 1px solid #f4f3ec;
  color: #222;
  position: relative;
}
.phead.first { height: 16px; border-top: 0; }
.fold { position: absolute; right: 4px; top: 2px; width: 10px; height: 11px; }
.row {
  height: 17px;
  flex: none;
  box-sizing: border-box;
  display: flex;
  align-items: center;
  position: relative;
}
.snap { background: #ecebe3; padding-left: 4px; border-bottom: 1px solid #dcd9cc; }
.snap.dark { border-top: 1px solid #808080; }
.chk {
  width: 12px;
  height: 12px;
  flex: none;
  box-sizing: border-box;
  border: 1px solid #6f6f6f;
  background: #fff;
  display: block;
}
.chk svg { display: block; width: 10px; height: 10px; }
.snapic { width: 13px; height: 13px; margin: 0 4px 0 6px; flex: none; }
.grp { padding-left: 4px; }
.grp b {
  margin-left: 5px;
  margin-bottom: 2px;
  font-family: "Noto Sans", "Liberation Sans", sans-serif;
  font-weight: 700;
  letter-spacing: .2px;
}
.row.grp > b:first-child { margin-left: 0; letter-spacing: 0; }
.grow { flex: 1; }
.cp { width: 16px; height: 16px; flex: none; margin-right: 0; }
.plano { padding-left: 4px; }
.plano .grow {
  background: #ecebe3;
  height: 16px;
  line-height: 16px;
  padding-left: 4px;
  margin-right: 2px;
}
.plano.off { color: #a3a298; }
.hs { width: 16px; height: 16px; flex: none; }
.capa {
  padding-left: 20px;
  background: #ecebe3;
  border-bottom: 1px solid #dcd9cc;
}
.capa.off { color: #a3a298; }
.bulb { width: 14px; height: 14px; flex: none; margin-right: 3px; }
.cube { width: 14px; height: 14px; flex: none; margin-right: 1px; }
.lock { position: absolute; width: 9px; height: 9px; bottom: 0; }
.l1 { right: 18px; }
.l2 { right: 0; }
.prest { flex: 1; margin-top: 2px; background: #ecebe4; border-top: 1px solid #f8f7f2; }

.vtool {
  width: 26px;
  flex: none;
  box-sizing: border-box;
  padding-top: 2px;
  display: flex;
  flex-direction: column;
  align-items: center;
  background: linear-gradient(90deg, #ece9d8, #f5f4ec 40%, #dcd9c8);
  border-left: 1px solid #aca899;
  border-right: 1px solid #aca899;
}
.vbtn {
  width: 23px;
  height: 22px;
  flex: none;
  box-sizing: border-box;
  display: flex;
  align-items: center;
  justify-content: center;
}
.hsep {
  width: 21px;
  height: 1px;
  margin: 1px 0 2px;
  flex: none;
  background: #b4b1a0;
}

.work {
  flex: 1;
  display: grid;
  grid-template-columns: 763px 18px;
  grid-template-rows: 538px 16px;
  min-width: 0;
}
.canvas {
  position: relative;
  overflow: hidden;
  background: #fff;
  box-shadow: inset 0 1px 0 #aca899;
}
.plan, .note { position: absolute; left: 0; top: 0; display: block; }
.note { pointer-events: none; }
.plan text { font-family: "Liberation Sans", sans-serif; }
.float {
  position: absolute;
  left: 1px;
  top: 2px;
  width: 94px;
  height: 52px;
  box-sizing: border-box;
  display: flex;
  flex-direction: column;
  background: #0a45d0;
  border: 3px solid #0a45d0;
  border-top: 0;
  border-bottom-width: 4px;
  border-radius: 2px 2px 0 0;
}
.ftitle {
  height: 21px;
  flex: none;
  display: flex;
  align-items: center;
  justify-content: space-between;
  color: #fff;
  font-family: "Noto Sans", sans-serif;
  font-weight: 700;
  font-size: 12px;
}
.fclose {
  width: 12px;
  height: 12px;
  display: flex;
  align-items: center;
  justify-content: center;
  border: 1px solid #fff;
  border-radius: 2px;
  background: #e05030;
  margin-right: 2px;
}
.fbody {
  flex: 1;
  display: flex;
  align-items: flex-start;
  background: linear-gradient(#f4f2e8, #e2dfce);
}
.fbtn {
  width: 22px;
  height: 21px;
  margin-right: 2px;
  flex: none;
  box-sizing: border-box;
  display: flex;
  align-items: center;
  justify-content: center;
}
.fbtn.active { margin-left: 7px; }

.vscroll {
  display: flex;
  flex-direction: column;
  align-items: center;
  padding: 2px 1px 1px 0;
  background: linear-gradient(90deg, #f3f1ea, #fdfdfb 50%, #f0eee6);
  box-sizing: border-box;
}
.hscroll {
  display: flex;
  align-items: center;
  padding-left: 2px;
  padding-right: 1px;
  background: linear-gradient(#f3f1ea, #fdfdfb 50%, #f0eee6);
  box-sizing: border-box;
}
.sbtn {
  width: 15px;
  height: 15px;
  flex: none;
  box-sizing: border-box;
  display: flex;
  align-items: center;
  justify-content: center;
  border: 1px solid #fff;
  border-radius: 2px;
  background: #c1d3fb;
}
.vthumb, .hthumb {
  flex: none;
  display: flex;
  align-items: center;
  justify-content: center;
  box-sizing: border-box;
  background: #c1d3fb;
  border: 1px solid #fff;
  border-radius: 2px;
  box-shadow: inset -1px -1px 0 #8ab0ee;
}
.vthumb { width: 15px; height: 94px; margin-top: 265px; }
.hthumb { width: 149px; height: 15px; margin-left: 306px; }
.vthumb i { width: 7px; height: 7px; background: repeating-linear-gradient(#fff 0 1px, #7d9fe8 1px 2px); }
.hthumb i { width: 7px; height: 7px; background: repeating-linear-gradient(90deg, #fff 0 1px, #7d9fe8 1px 2px); }
.corner { background: #ece9d8; }

.tabs {
  height: 15px;
  margin-top: 1px;
  flex: none;
  box-sizing: border-box;
  display: flex;
  padding-left: 3px;
  background: #ece9d8;
  border-top: 1px solid #000;
  white-space: nowrap;
  letter-spacing: -0.33px;
}
.tab {
  position: relative;
  height: 13px;
  padding: 0 14px;
  margin-left: -7px;
  line-height: 13px;
}
.tab:first-child { margin-left: 0; }
.tab::before, .tab::after {
  content: "";
  position: absolute;
  top: 0;
  bottom: 0;
  width: 50%;
  box-sizing: border-box;
  border-bottom: 1px solid #000;
}
.tab::before { left: 7px; border-left: 1px solid #000; transform: skewX(43deg); }
.tab::after { right: 7px; border-right: 1px solid #000; transform: skewX(-43deg); }
.tab em { position: relative; z-index: 2; font-style: normal; }
.tab.active { z-index: 1; margin-top: -1px; height: 14px; line-height: 15px; }
.tab.active::before, .tab.active::after { background: #fff; }

.msg {
  height: 48px;
  flex: none;
  box-sizing: border-box;
  background: #ffffdd;
  border-top: 1px solid #aca899;
  padding: 0 0 0 8px;
}
.msgline {
  height: 16px;
  display: flex;
  align-items: center;
  gap: 6px;
}
.msgline span { margin-bottom: 2px; }
.status {
  height: 20px;
  flex: none;
  box-sizing: border-box;
  display: flex;
  background: #ece9d8;
  border-top: 1px solid #aca899;
  gap: 2px;
}
.stleft, .stright {
  display: flex;
  align-items: center;
  gap: 3px;
  box-sizing: border-box;
  padding-left: 3px;
}
.stleft { flex: 1; }
.stright { width: 141px; border-left: 1px solid #b4b1a0; border-right: 1px solid #b4b1a0; gap: 3px; padding-left: 2px; }
</style>

<style>
html, body { margin: 0; padding: 0; background: #fff; overflow: hidden; }
</style>
